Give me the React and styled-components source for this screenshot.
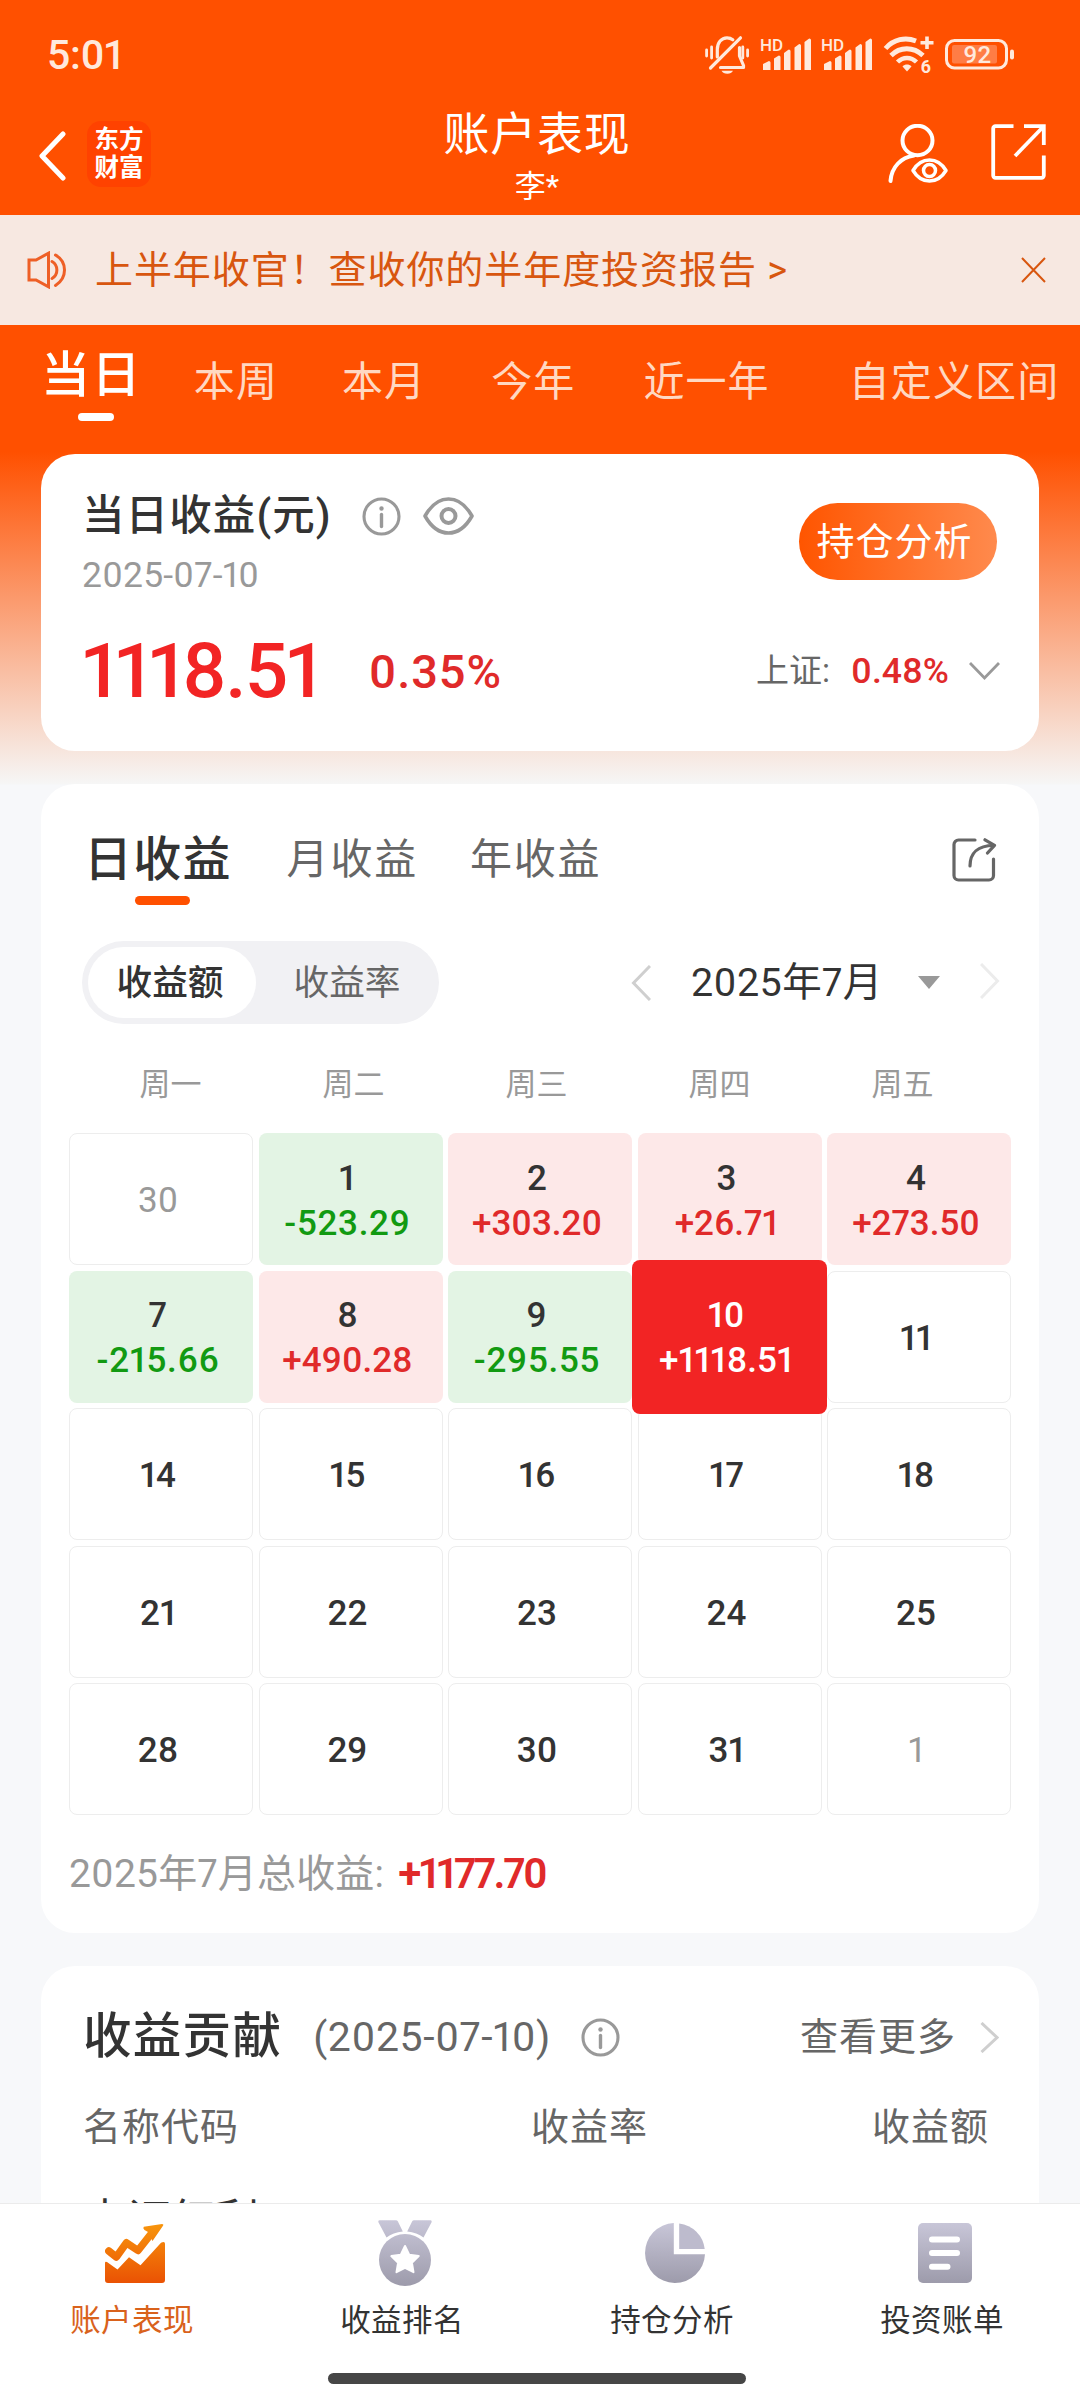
import React from 'react';
import styled, { createGlobalStyle, css } from 'styled-components';

const colors = {
  brand: '#ff5000',
  rise: '#f22424',
  riseText: '#e02a2a',
  fall: '#129a12',
  ink: '#333333',
  body: '#666666',
  muted: '#999999',
  page: '#f7f8fa',
};

const GlobalStyle = createGlobalStyle`
  * { box-sizing: border-box; }
  body {
    margin: 0;
    background: ${colors.page};
    font-family: Roboto, "Noto Sans CJK SC", sans-serif;
    font-feature-settings: "pnum" 1;
    font-weight: 400;
    color: ${colors.ink};
  }
`;

const Screen = styled.div`
  width: 1080px;
  height: 2400px;
  display: flex;
  flex-direction: column;
  overflow: hidden;
  background: linear-gradient(
    to bottom,
    ${colors.brand} 0,
    ${colors.brand} 452px,
    #f6f6f6 784px,
    ${colors.page} 785px
  );
`;

/* ---------- status bar ---------- */

const StatusBar = styled.div`
  height: 107px;
  flex: none;
  display: flex;
  align-items: center;
  padding: 2px 65px 0 47px;
  color: #ffe9dc;
`;

const Clock = styled.span`
  flex: 1;
  font-size: 41px;
  font-weight: 500;
  line-height: 48px;
  letter-spacing: -0.3px;
`;

const StatusIcons = styled.div`
  display: flex;
  align-items: center;
  gap: 11.5px;
  svg { display: block; overflow: visible; }
`;

const SvgText = styled.text`
  font-family: Roboto, sans-serif;
  font-weight: ${(p) => p.$weight || 500};
  font-size: ${(p) => p.$size}px;
  fill: #ffe9dc;
`;

/* ---------- header ---------- */

const Header = styled.header`
  height: 108px;
  flex: none;
  display: grid;
  grid-template-columns: 1fr auto 1fr;
  padding: 0 34px 0 39px;
`;

const HeaderLeft = styled.div`
  display: flex;
  align-items: flex-start;
  gap: 21px;
  padding-top: 14px;
`;

const BackIcon = styled.svg`
  margin-top: 10px;
`;

const Brand = styled.div`
  width: 64px;
  height: 66px;
  border-radius: 14px;
  background: #ff4200;
  display: flex;
  flex-direction: column;
  justify-content: center;
  align-items: center;
  color: #fff;
  font-size: 24.5px;
  font-weight: 700;
  line-height: 28px;
`;

const HeaderTitle = styled.div`
  text-align: center;
  color: #fff;
  padding-right: 11px;
`;

const TitleText = styled.h1`
  margin: -1px 0 0;
  font-size: 46px;
  font-weight: 400;
  line-height: 56px;
  letter-spacing: 0.8px;
`;

const TitleSub = styled.div`
  font-size: 31px;
  font-weight: 400;
  line-height: 40px;
  margin-top: 5px;
`;

const HeaderRight = styled.div`
  display: flex;
  justify-content: flex-end;
  align-items: flex-start;
  gap: 42px;
  padding-top: 17px;
`;

/* ---------- notice ---------- */

const Notice = styled.div`
  height: 110px;
  flex: none;
  display: flex;
  align-items: center;
  background: #f7e8e1;
  padding: 0 34px 0 27px;
`;

const NoticeText = styled.span`
  flex: 1;
  margin-left: 28px;
  font-size: 38px;
  letter-spacing: 0.93px;
  line-height: 56px;
  color: #d8560f;
`;

/* ---------- period tabs ---------- */

const PeriodTabs = styled.nav`
  height: 129px;
  flex: none;
  display: flex;
  align-items: flex-start;
  padding-left: 41px;
`;

const PeriodTab = styled.div`
  display: flex;
  flex-direction: column;
  align-items: center;
  white-space: nowrap;
  margin-left: ${(p) => p.$gap || 0}px;
  line-height: 60px;
  ${(p) =>
    p.$active
      ? css`
          padding-top: 21px;
          font-size: 49px;
          letter-spacing: 1.4px;
          font-weight: 500;
          color: #fff;
        `
      : css`
          padding-top: 27px;
          font-size: 41px;
          letter-spacing: 1.1px;
          color: #ffd8c2;
        `}
`;

const PeriodMark = styled.span`
  width: 36px;
  height: 8px;
  border-radius: 4px;
  background: #fff;
  margin: 7px 0 0 10px;
`;

/* ---------- cards ---------- */

const Content = styled.main`
  flex: 1;
  min-height: 0;
  overflow: hidden;
  display: flex;
  flex-direction: column;
  gap: 33px;
  padding: 0 41px;
`;

const Card = styled.section`
  flex: none;
  width: 998px;
  height: ${(p) => p.$height}px;
  border-radius: 34px;
  background: #fff;
`;

const SummaryCard = styled(Card)`
  display: flex;
  flex-direction: column;
  padding: 34px 39px 0 41px;
`;

const SplitRow = styled.div`
  display: flex;
  justify-content: space-between;
`;

const SummaryTitle = styled.div`
  display: flex;
  align-items: center;
  height: 56px;
  line-height: 56px;
  font-size: 42.5px;
  letter-spacing: 1.1px;
  font-weight: 500;
  svg { display: block; }
`;

const IconGap = styled.span`
  margin-left: ${(p) => p.$gap}px;
`;

const SummaryDate = styled.div`
  margin-top: 9px;
  font-size: 35.5px;
  line-height: 44px;
  letter-spacing: 0.2px;
  color: ${colors.muted};
`;

const PillButton = styled.button`
  width: 198px;
  height: 77px;
  margin: 15px 3px 0 0;
  padding: 0;
  border: 0;
  border-radius: 39px;
  background: linear-gradient(to right, #ff5500, #ff8a4d);
  color: #fff;
  font-family: inherit;
  font-size: 38px;
  font-weight: 400;
  letter-spacing: 1px;
  line-height: 79px;
  padding-right: 7px;
`;

const SummaryFigures = styled.div`
  display: flex;
  align-items: center;
  height: 90px;
  margin-top: 29px;
`;

const BigAmount = styled.span`
  font-size: 76.5px;
  font-weight: 500;
  letter-spacing: -1.8px;
  line-height: 90px;
  color: ${colors.rise};
`;

const BigRate = styled.span`
  flex: 1;
  margin-left: 49px;
  font-size: 47px;
  font-weight: 500;
  letter-spacing: 0.9px;
  color: ${colors.riseText};
`;

const IndexLabel = styled.span`
  font-size: 33px;
  line-height: 50px;
  color: ${colors.body};
`;

const IndexRate = styled.span`
  margin: 0 20px 0 21px;
  font-size: 35.5px;
  font-weight: 500;
  letter-spacing: 0;
  color: ${colors.riseText};
`;

/* ---------- calendar card ---------- */

const CalendarCard = styled(Card)`
  display: flex;
  flex-direction: column;
`;

const KindTabs = styled.div`
  display: flex;
  align-items: flex-start;
  height: 157px;
  padding: 46px 42px 0 43px;
`;

const KindTab = styled.div`
  display: flex;
  flex-direction: column;
  align-items: center;
  margin-left: ${(p) => p.$gap || 0}px;
  line-height: 60px;
  font-size: ${(p) => (p.$active ? 48 : 42)}px;
  letter-spacing: ${(p) => (p.$active ? 1.2 : 1.8)}px;
  font-weight: ${(p) => (p.$active ? 500 : 400)};
  color: ${(p) => (p.$active ? colors.ink : colors.body)};
`;

const KindMark = styled.span`
  width: 55px;
  height: 9px;
  border-radius: 5px;
  margin: 6px 0 0 9px;
  background: ${colors.brand};
`;

const ShareSlot = styled.span`
  margin: 8px 0 0 auto;
`;

const ControlRow = styled.div`
  display: flex;
  align-items: center;
  height: 83px;
  padding: 0 39px 0 41px;
`;

const Toggle = styled.div`
  display: flex;
  align-items: center;
  width: 357px;
  height: 83px;
  padding: 6px;
  border-radius: 42px;
  background: #f1f1f4;
`;

const ToggleItem = styled.span`
  flex: none;
  width: ${(p) => (p.$active ? 168 : 182)}px;
  height: 71px;
  border-radius: 36px;
  text-align: center;
  line-height: 72px;
  font-size: 35.7px;
  padding-right: ${(p) => (p.$active ? 4 : 0)}px;
  background: ${(p) => (p.$active ? '#fff' : 'transparent')};
  font-weight: ${(p) => (p.$active ? 500 : 400)};
  color: ${(p) => (p.$active ? colors.ink : colors.body)};
`;

const MonthPicker = styled.div`
  margin-left: auto;
  display: flex;
  align-items: center;
`;

const MonthLabel = styled.span`
  width: 186px;
  margin: 0 41px 0 40px;
  white-space: nowrap;
  font-size: 39.5px;
  line-height: 50px;
  letter-spacing: 0.4px;
  font-weight: 400;
`;

const NextArrow = styled.span`
  margin-left: 40px;
`;

const WeekRow = styled.div`
  display: grid;
  grid-template-columns: repeat(5, 183px);
  margin: 39px 0 0 38px;
  height: 44px;
  line-height: 44px;
  text-align: center;
  font-size: 31px;
  color: ${colors.muted};
`;

const DayGrid = styled.div`
  display: grid;
  grid-template-columns: repeat(5, 184px);
  grid-auto-rows: 132px;
  column-gap: 5.5px;
  row-gap: 5.5px;
  margin: 26px 0 0 28px;
`;

const tones = {
  plain: css`
    background: #fff;
    border: 1px solid #ededed;
    color: ${colors.ink};
  `,
  outside: css`
    background: #fff;
    border: 1px solid #ededed;
    color: ${colors.muted};
  `,
  rise: css`
    background: #fde8e8;
    color: ${colors.riseText};
  `,
  fall: css`
    background: #e3f4e4;
    color: ${colors.fall};
    letter-spacing: 0.7px;
  `,
  selected: css`
    z-index: 1;
    margin: -11px -5px -11px -6px;
    background: ${colors.rise};
    color: #fff;
  `,
};

const DayCell = styled.div`
  display: flex;
  flex-direction: column;
  align-items: center;
  justify-content: center;
  padding: 3px 6px 0 0;
  border-radius: 8px;
  font-size: 35px;
  font-weight: ${(p) => (p.$tone === 'outside' ? 400 : 500)};
  line-height: 45px;
  ${(p) => tones[p.$tone]}
`;

const DayNumber = styled.span`
  color: ${(p) => (p.$tone === 'rise' || p.$tone === 'fall' ? colors.ink : 'inherit')};
`;

const MonthTotal = styled.div`
  display: flex;
  align-items: center;
  margin: 34px 0 0 28px;
  height: 50px;
  line-height: 50px;
  font-size: 39px;
  letter-spacing: 0.2px;
  color: ${colors.muted};
`;

const TotalValue = styled.span`
  margin-left: 14px;
  font-size: 42px;
  font-weight: 600;
  letter-spacing: -2.3px;
  color: ${colors.riseText};
`;

/* ---------- contribution card ---------- */

const ContributionCard = styled(Card)`
  padding: 41px 40px 0 42px;
`;

const ContributionHead = styled.div`
  display: flex;
  align-items: center;
  height: 60px;
  line-height: 60px;
  svg { display: block; }
`;

const ContributionTitle = styled.span`
  font-size: 48.5px;
  letter-spacing: 1.3px;
  font-weight: 500;
`;

const ContributionDate = styled.span`
  margin: 0 30px 0 31px;
  font-size: 41px;
  letter-spacing: 0.6px;
  color: ${colors.body};
`;

const MoreLink = styled.span`
  margin-left: auto;
  margin-right: 24px;
  font-size: 38px;
  letter-spacing: 1px;
  color: ${colors.body};
`;

const ColumnHead = styled.div`
  display: grid;
  grid-template-columns: 304px 261px 1fr;
  margin-top: 32px;
  padding-right: 10px;
  font-size: 38px;
  letter-spacing: 1px;
  line-height: 56px;
  color: ${colors.body};
  span:nth-child(2), span:nth-child(3) { text-align: right; }
`;

const HoldingName = styled.div`
  margin-top: 36px;
  font-size: 44px;
  line-height: 60px;
  font-weight: 400;
`;

/* ---------- bottom navigation ---------- */

const BottomNav = styled.nav`
  flex: none;
  height: 197px;
  border-top: 1px solid #ebebeb;
  background: #fff;
  display: flex;
  flex-direction: column;
  align-items: center;
`;

const NavItems = styled.div`
  width: 1080px;
  height: 169px;
  display: grid;
  grid-template-columns: repeat(4, 270px);
`;

const NavItem = styled.div`
  display: flex;
  flex-direction: column;
  align-items: center;
  color: ${(p) => (p.$active ? '#d9621c' : colors.ink)};
  svg { display: block; margin-top: 16px; }
`;

const NavLabel = styled.span`
  margin-top: 13px;
  padding-right: 6px;
  font-size: 30.5px;
  letter-spacing: 0.4px;
  line-height: 44px;
`;

const HomeBar = styled.span`
  width: 418px;
  height: 11px;
  border-radius: 6px;
  background: #464646;
  margin-right: 6px;
`;

/* ---------- icons ---------- */

const MutedBell = () => (
  <svg width="44" height="38" viewBox="0 0 44 38" fill="none" stroke="#ffe9dc" strokeWidth="3.2" strokeLinecap="round">
    <path d="M12.3 21V13.5C12.3 6.500 16.500 1.800 22 1.800c2.300 0 4.200.7 5.800 2" />
    <path d="M34.500 11.500v8.500l4 9.500v2H15.500" strokeLinejoin="round" />
    <path d="M35.500 1.800 5.500 32" />
    <path d="M16.500 34.800h11.500c-1 1.900-3 3-5.700 3s-4.800-1.100-5.800-3Z" fill="#ffe9dc" stroke="none" />
    <path d="M1.600 14v6M6.600 11v11M37.800 11v11M42.600 14v6" strokeWidth="2.800" />
  </svg>
);

const Signal = () => (
  <svg width="50" height="34" viewBox="0 0 50 34">
    <SvgText x="-1" y="13" $size="17">HD</SvgText>
    <g fill="#ffe9dc">
      <path d="M2 26l5-2.500a1.500 1.500 0 0 1 2.500 1V32H2Z" />
      <path d="M13 20.500l4-2.500a1.500 1.500 0 0 1 2.500 1V32H13Z" />
      <path d="M23 15l4-3a1.500 1.500 0 0 1 2.500 1v19H23Z" />
      <path d="M33.500 9.500l4-3a1.500 1.500 0 0 1 2.500 1V32h-6.500Z" />
      <path d="M43.500 4l4-3A1.500 1.500 0 0 1 50 2v30h-6.500Z" />
    </g>
  </svg>
);

const Wifi = () => (
  <svg width="50" height="37" viewBox="0 0 50 37" fill="none" stroke="#ffe9dc">
    <path d="M1.500 12.500C9.500 3.200 21.500 0.800 32 5" strokeWidth="4.800" />
    <path d="M7 19.500c9-9 22.500-9 32 0" strokeWidth="4.800" />
    <path d="M13.500 26c5.500-5.500 13.500-5.500 19 0" strokeWidth="4.500" />
    <path d="M23 35.500l-4.500-5c2.500-2.600 6.500-2.600 9 0Z" fill="#ffe9dc" stroke="none" />
    <path d="M36.500 6.700h13M43 0.500v12.500" strokeWidth="3.600" />
    <SvgText x="36.500" y="36.500" $size="18" $weight="700" stroke="none">6</SvgText>
  </svg>
);

const Battery = () => (
  <svg width="70" height="31" viewBox="0 0 70 31">
    <rect x="1.500" y="1.500" width="60" height="27.500" rx="8" fill="none" stroke="#ffe9dc" strokeWidth="3" />
    <rect x="7" y="6" width="45" height="18.500" rx="2" fill="#ff7d45" />
    <rect x="65" y="10.500" width="4" height="10" rx="2" fill="#ffe9dc" />
    <SvgText x="18.500" y="24" $size="24" $weight="500">92</SvgText>
  </svg>
);

const UserEye = () => (
  <svg width="61" height="61" viewBox="0 0 61 61" fill="none" stroke="#fff" strokeWidth="4" strokeLinecap="round">
    <ellipse cx="29.500" cy="16.500" rx="15" ry="14.700" />
    <path d="M26 31.500C13 33.500 3.500 43 2.500 57" />
    <path d="M25 46.500C29.500 39 35 36 41.500 36S53.500 39 58 46.500C53.500 54 48 57 41.500 57S29.500 54 25 46.500Z" strokeWidth="3.500" strokeLinejoin="round" />
    <circle cx="41.500" cy="46.500" r="6" strokeWidth="3.500" />
  </svg>
);

const OpenOut = () => (
  <svg width="55" height="56" viewBox="0 0 55 56" fill="none" stroke="#fff" strokeWidth="3.800">
    <path d="M22.500 2.200H4.500a2.300 2.300 0 0 0-2.300 2.300v47a2.300 2.300 0 0 0 2.300 2.300h46a2.300 2.300 0 0 0 2.300-2.300V31.500" />
    <path d="M33 2.200h19.800V21" />
    <path d="M52.500 2.500 24 32" />
  </svg>
);

const Speaker = () => (
  <svg width="40" height="38" viewBox="0 0 40 38" fill="none" stroke="#ee5f26" strokeWidth="3" strokeLinejoin="miter">
    <path d="M2 9h7l12.500-6.800v33.600L9 29H2Z" />
    <path d="M25 10.500c6.500 3.800 6.500 13.200 0 17" strokeLinecap="round" />
    <path d="M28.500 4c12 7 12 23 0 30.500" strokeLinecap="round" />
  </svg>
);

const Info = () => (
  <svg width="39" height="39" viewBox="0 0 39 39" fill="none" stroke="#999" strokeWidth="3.100">
    <circle cx="19.500" cy="19.500" r="17.500" />
    <path d="M19.500 17.500v12" strokeWidth="3.400" strokeLinecap="round" />
    <circle cx="19.500" cy="11.500" r="2.200" fill="#999" stroke="none" />
  </svg>
);

const Eye = () => (
  <svg width="51" height="38" viewBox="0 0 51 38" fill="none" stroke="#999" strokeWidth="3.600">
    <path d="M2 19C8.500 7.500 16 2 25.500 2S42.500 7.500 49 19C42.500 30.500 35 36 25.500 36S8.500 30.500 2 19Z" strokeLinejoin="round" />
    <circle cx="25.500" cy="19" r="7" strokeWidth="4" />
  </svg>
);

const Chevron = ({ d, w, h, color, stroke = 3 }) => (
  <svg width={w} height={h} viewBox={`0 0 ${w} ${h}`} fill="none" stroke={color} strokeWidth={stroke}>
    <path d={d} />
  </svg>
);

const ShareOut = () => (
  <svg width="45" height="45" viewBox="0 0 45 45" fill="none" stroke="#666" strokeWidth="3.200" strokeLinecap="round">
    <path d="M23 2H6.500A4.500 4.500 0 0 0 2 6.500v31A4.500 4.500 0 0 0 6.500 42H37a4.500 4.500 0 0 0 4.500-4.500V21" />
    <path d="M18 28C18 15 26 7.500 41.500 7.500" />
    <path d="M33 1.800 42.500 7.300 35.500 15" strokeLinejoin="round" />
  </svg>
);

const Grey = ({ id }) => (
  <linearGradient id={id} x1="0" y1="0" x2="0" y2="1">
    <stop offset="0" stopColor="#c8c6d8" />
    <stop offset="1" stopColor="#9d9bab" />
  </linearGradient>
);

const TrendIcon = () => (
  <svg width="60" height="66" viewBox="0 -3 60 66">
    <defs>
      <linearGradient id="trend" gradientUnits="userSpaceOnUse" x1="0" y1="0" x2="0" y2="60">
        <stop offset="0" stopColor="#f8960c" />
        <stop offset="1" stopColor="#ea5204" />
      </linearGradient>
    </defs>
    <path d="M0 40q0-2 2-1l10.500 7.500L24 34.200l11.500 8L56 19.800q4-2 4 1V57q0 3-3 3H3q-3 0-3-3Z" fill="url(#trend)" />
    <path d="M3.800 28l7.500 6L21.500 19.800 33 27.500 46 11" fill="none" stroke="url(#trend)" strokeWidth="7.500" strokeLinejoin="round" strokeLinecap="round" />
    <path d="M38.800 3.800 57 1q2 0 1 1.800L47.500 18 43 9l-3.500-2q-2-2-.7-3.200Z" fill="url(#trend)" />
  </svg>
);

const MedalIcon = () => (
  <svg width="54" height="66" viewBox="0 0 54 66">
    <defs>
      <linearGradient id="medal" gradientUnits="userSpaceOnUse" x1="0" y1="0" x2="0" y2="66">
        <stop offset="0" stopColor="#c8c6d8" />
        <stop offset="1" stopColor="#9d9bab" />
      </linearGradient>
    </defs>
    <g fill="url(#medal)">
      <path d="M1.500.3h16.500q1.200 0 1.800 1l5 10.200Q15 12.500 8.500 17.500L.3 2Q0 .3 1.500.3Z" />
      <path d="M52.500.3H36q-1.200 0-1.800 1l-5 10.200q9.800 1 16.300 6L53.700 2Q54 .3 52.500.3Z" />
      <circle cx="27" cy="40" r="26" />
    </g>
    <path d="M27 26l4.200 8.700 9.500 1.400-6.800 6.600 1.600 9.500L27 47.800l-8.500 4.400 1.600-9.500-6.800-6.600 9.500-1.400Z" fill="#fff" stroke="#fff" strokeWidth="2" strokeLinejoin="round" />
  </svg>
);

const PieIcon = () => (
  <svg width="60" height="66" viewBox="0 -3 60 66">
    <defs><Grey id="pie" /></defs>
    <path d="M28.800 0A30 30 0 1 0 60 31.300H28.800Z" fill="url(#pie)" />
    <path d="M34.200.5A29 29 0 0 1 59.700 26H34.200Z" fill="#bdbbcd" />
  </svg>
);

const BillIcon = () => (
  <svg width="54" height="66" viewBox="0 -3 54 66">
    <defs><Grey id="bill" /></defs>
    <rect width="54" height="60" rx="5" fill="url(#bill)" />
    <path d="M14 16.500h25M14 30h25M14 43.800h15.500" stroke="#fff" strokeWidth="6" strokeLinecap="round" />
  </svg>
);

/* ---------- data ---------- */

const periods = [
  ['本周', 52],
  ['本月', 64],
  ['今年', 65],
  ['近一年', 68],
  ['自定义区间', 79],
];

const days = [
  ['30', null, 'outside'],
  ['1', '-523.29', 'fall'],
  ['2', '+303.20', 'rise'],
  ['3', '+26.71', 'rise'],
  ['4', '+273.50', 'rise'],
  ['7', '-215.66', 'fall'],
  ['8', '+490.28', 'rise'],
  ['9', '-295.55', 'fall'],
  ['10', '+1118.51', 'selected'],
  ...['11', '14', '15', '16', '17', '18', '21', '22', '23', '24', '25', '28', '29', '30', '31'].map((d) => [d, null, 'plain']),
  ['1', null, 'outside'],
];

const navItems = [
  ['账户表现', TrendIcon],
  ['收益排名', MedalIcon],
  ['持仓分析', PieIcon],
  ['投资账单', BillIcon],
];

export default function App() {
  return (
    <>
      <GlobalStyle />
      <Screen>
        <StatusBar>
          <Clock>5:01</Clock>
          <StatusIcons>
            <MutedBell />
            <Signal />
            <Signal />
            <Wifi />
            <Battery />
          </StatusIcons>
        </StatusBar>

        <Header>
          <HeaderLeft>
            <BackIcon width="27" height="50" viewBox="0 0 27 50" fill="none" stroke="#fff" strokeWidth="5" strokeLinecap="round" strokeLinejoin="round">
              <path d="M24 3 3 25l21 22" />
            </BackIcon>
            <Brand>
              <span>东方</span>
              <span>财富</span>
            </Brand>
          </HeaderLeft>
          <HeaderTitle>
            <TitleText>账户表现</TitleText>
            <TitleSub>李*</TitleSub>
          </HeaderTitle>
          <HeaderRight>
            <UserEye />
            <OpenOut />
          </HeaderRight>
        </Header>

        <Notice>
          <Speaker />
          <NoticeText>上半年收官！查收你的半年度投资报告 &gt;</NoticeText>
          <Chevron d="M1 1l23 24M24 1 1 25" w={25} h={26} color="#d8560f" stroke={2} />
        </Notice>

        <PeriodTabs>
          <PeriodTab $active>
            当日
            <PeriodMark />
          </PeriodTab>
          {periods.map(([label, gap]) => (
            <PeriodTab key={label} $gap={gap}>{label}</PeriodTab>
          ))}
        </PeriodTabs>

        <Content>
          <SummaryCard $height={297}>
            <SplitRow>
              <div>
                <SummaryTitle>
                  当日收益(元)
                  <IconGap $gap={30}><Info /></IconGap>
                  <IconGap $gap={22}><Eye /></IconGap>
                </SummaryTitle>
                <SummaryDate>2025-07-10</SummaryDate>
              </div>
              <PillButton>持仓分析</PillButton>
            </SplitRow>
            <SummaryFigures>
              <BigAmount>1118.51</BigAmount>
              <BigRate>0.35%</BigRate>
              <IndexLabel>上证:</IndexLabel>
              <IndexRate>0.48%</IndexRate>
              <Chevron d="M1 1l14.500 15L30 1" w={31} h={18} color="#999" stroke={2.8} />
            </SummaryFigures>
          </SummaryCard>

          <CalendarCard $height={1149}>
            <KindTabs>
              <KindTab $active>
                日收益
                <KindMark />
              </KindTab>
              <KindTab $gap={55}>月收益</KindTab>
              <KindTab $gap={52}>年收益</KindTab>
              <ShareSlot><ShareOut /></ShareSlot>
            </KindTabs>

            <ControlRow>
              <Toggle>
                <ToggleItem $active>收益额</ToggleItem>
                <ToggleItem>收益率</ToggleItem>
              </Toggle>
              <MonthPicker>
                <Chevron d="M19 1 2.500 18 19 35" w={20} h={36} color="#cfcfcf" />
                <MonthLabel>2025年7月</MonthLabel>
                <svg width="22" height="13" viewBox="0 0 22 13"><path d="M0 0h22L11 13Z" fill="#999" /></svg>
                <NextArrow>
                  <Chevron d="M1 1l16.500 17L1 35" w={20} h={36} color="#ececec" />
                </NextArrow>
              </MonthPicker>
            </ControlRow>

            <WeekRow>
              {['周一', '周二', '周三', '周四', '周五'].map((d) => <span key={d}>{d}</span>)}
            </WeekRow>

            <DayGrid>
              {days.map(([day, amount, tone], i) => (
                <DayCell key={i} $tone={tone}>
                  <DayNumber $tone={tone}>{day}</DayNumber>
                  {amount && <span>{amount}</span>}
                </DayCell>
              ))}
            </DayGrid>

            <MonthTotal>
              2025年7月总收益:
              <TotalValue>+1177.70</TotalValue>
            </MonthTotal>
          </CalendarCard>

          <ContributionCard $height={400}>
            <ContributionHead>
              <ContributionTitle>收益贡献</ContributionTitle>
              <ContributionDate>(2025-07-10)</ContributionDate>
              <Info />
              <MoreLink>查看更多</MoreLink>
              <Chevron d="M1.500 1 17 15.500 1.500 30" w={19} h={31} color="#cfcfcf" />
            </ContributionHead>
            <ColumnHead>
              <span>名称代码</span>
              <span>收益率</span>
              <span>收益额</span>
            </ColumnHead>
            <HoldingName>中证红利</HoldingName>
          </ContributionCard>
        </Content>

        <BottomNav>
          <NavItems>
            {navItems.map(([label, Icon], i) => (
              <NavItem key={label} $active={i === 0}>
                <Icon />
                <NavLabel>{label}</NavLabel>
              </NavItem>
            ))}
          </NavItems>
          <HomeBar />
        </BottomNav>
      </Screen>
    </>
  );
}
